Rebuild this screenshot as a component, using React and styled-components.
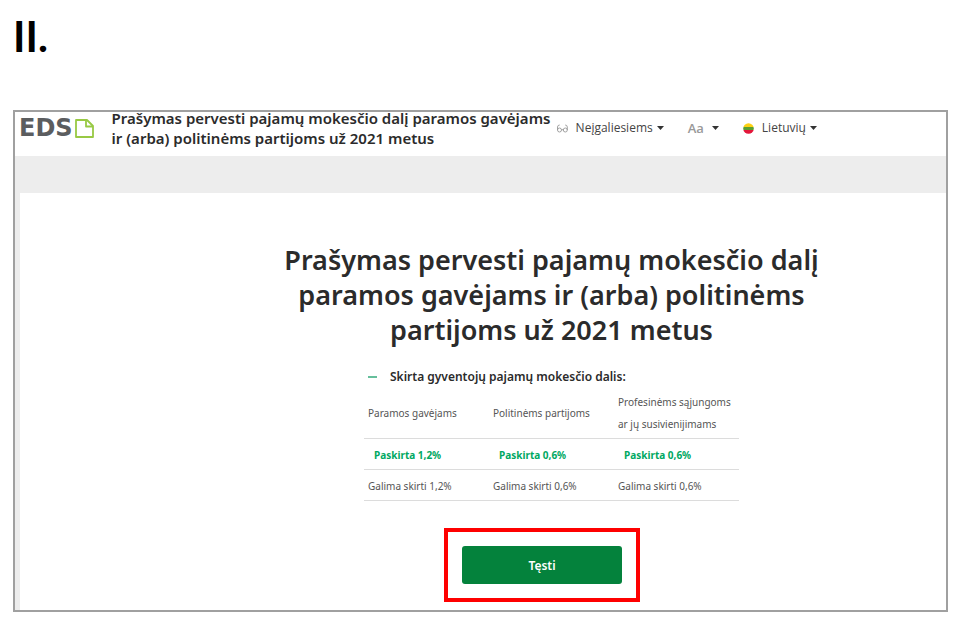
import React from "react";
import styled, { createGlobalStyle } from "styled-components";

const Global = createGlobalStyle`
  *, *::before, *::after { box-sizing: border-box; }
  body {
    margin: 0;
    background: #fff;
    color: #2b2b2b;
    font-family: "Noto Sans", "Open Sans", sans-serif;
  }
  h1, h2, h3, p { margin: 0; }
  button { font-family: inherit; cursor: pointer; }
`;

const Page = styled.div`
  padding: 12px 24px 20px 13px;
`;

const SectionNumber = styled.h1`
  margin-bottom: 50px;
  color: #000;
  font-family: "Lato", sans-serif;
  font-size: 42px;
  line-height: 48px;
  font-weight: 700;
`;

const Frame = styled.div`
  border: 2px solid #a0a0a0;
  background: #fff;
`;

const Header = styled.header`
  display: flex;
  align-items: center;
  height: 44px;
  padding: 0 4px 12px;
`;

const Logo = styled.a`
  display: flex;
  align-items: center;
  gap: 2px;
  color: #5b5d5f;
  font-family: "DejaVu Sans", sans-serif;
  font-size: 24px;
  line-height: 24px;
  font-weight: 700;
  text-decoration: none;
`;

const HeaderTitle = styled.p`
  flex: none;
  width: 445px;
  margin-left: 18px;
  font-size: 15px;
  line-height: 20px;
  font-weight: 600;
  white-space: nowrap;
`;

const Tools = styled.nav`
  display: flex;
  align-items: center;
  gap: 24px;
`;

const Tool = styled.button`
  display: flex;
  align-items: center;
  gap: 8px;
  padding: 0;
  border: 0;
  background: none;
  color: #444;
  font-family: "Open Sans", sans-serif;
  font-size: 12px;
  line-height: 16px;
  white-space: nowrap;
`;

const ToolLabel = styled.span`
  display: flex;
  align-items: center;
  gap: 4px;
`;

const TextSize = styled.span`
  color: #999;
  font-size: 13px;
  font-weight: 600;
`;

const Backdrop = styled.div`
  padding: 37px 0 0 5px;
  background: #ededed;
`;

const Panel = styled.main`
  display: flex;
  flex-direction: column;
  align-items: center;
  padding: 49px 0 8px 137px;
  background: #fff;
`;

const Title = styled.h2`
  font-size: 27px;
  line-height: 35px;
  font-weight: 600;
  text-align: center;
`;

const Share = styled.section`
  width: 375px;
  margin-top: 20px;
`;

const ShareToggle = styled.button`
  display: flex;
  align-items: center;
  gap: 13px;
  padding: 0 4px;
  border: 0;
  background: none;
  color: #2b2b2b;
  font-size: 12px;
  line-height: 20px;
  font-weight: 600;
  white-space: nowrap;
`;

const Dash = styled.span`
  width: 9px;
  height: 2px;
  background: #66bf9c;
`;

const ShareTable = styled.table`
  width: 100%;
  margin-top: 4px;
  border-collapse: collapse;
  table-layout: fixed;
  color: #555;
  font-size: 10px;
  line-height: 22px;
`;

const Cell = styled.td`
  padding: 5px ${(p) => (p.$assigned ? 10 : 4)}px 3px;
  border-bottom: 1px solid #dcdcdc;
  color: ${(p) => (p.$assigned ? "#00a862" : "inherit")};
  font-weight: ${(p) => (p.$assigned ? 700 : 400)};
  white-space: nowrap;
`;

const HeadCell = styled.th`
  padding: 0 4px 3px;
  border-bottom: 1px solid #dcdcdc;
  font-weight: 400;
  text-align: left;
  white-space: nowrap;
`;

const Highlight = styled.div`
  margin: 27px 19px 0 0;
  padding: 14px;
  border: 4px solid #fe0000;
`;

const Continue = styled.button`
  display: block;
  width: 160px;
  height: 38px;
  border: 0;
  border-radius: 3px;
  background: #04823c;
  color: #fff;
  font-size: 12px;
  font-weight: 600;
`;

const Caret = () => (
  <svg width="7" height="4" viewBox="0 0 7 4" aria-hidden="true">
    <path d="M0 0h7L3.500 4z" fill="#333" />
  </svg>
);

const DocumentIcon = () => (
  <svg width="19" height="19" viewBox="0 0 19 19" fill="none" stroke="#98c944" strokeWidth="1.800" strokeLinejoin="round" aria-hidden="true">
    <path d="M1 1h11l6 6v11H1z" />
    <path d="M11 1v6.500h7" />
  </svg>
);

const GlassesIcon = () => (
  <svg width="11" height="9" viewBox="0 0 11 9" fill="none" stroke="#999" strokeWidth="0.900" aria-hidden="true">
    <circle cx="2.500" cy="6" r="2" />
    <circle cx="8.300" cy="6" r="2" />
    <path d="M4.500 5.700h1.800M.5 6V3Q.6 1 2.700 1M10.300 6V3Q10.200 1 8.200 1" />
  </svg>
);

const FlagIcon = () => (
  <svg width="11" height="11" viewBox="0 0 11 11" aria-hidden="true">
    <clipPath id="flag-circle">
      <circle cx="5.500" cy="5.500" r="5.300" />
    </clipPath>
    <g clipPath="url(#flag-circle)">
      <path d="M0 0h11v4H0z" fill="#fdd113" />
      <path d="M0 4h11v3H0z" fill="#5a9f32" />
      <path d="M0 7h11v4H0z" fill="#e3173a" />
    </g>
  </svg>
);

const rows = [
  { assigned: true, cells: ["Paskirta 1,2%", "Paskirta 0,6%", "Paskirta 0,6%"] },
  { assigned: false, cells: ["Galima skirti 1,2%", "Galima skirti 0,6%", "Galima skirti 0,6%"] },
];

export default function App() {
  return (
    <>
      <Global />
      <Page>
        <SectionNumber>II.</SectionNumber>
        <Frame>
          <Header>
            <Logo href="#">
              EDS
              <DocumentIcon />
            </Logo>
            <HeaderTitle>
              Prašymas pervesti pajamų mokesčio dalį paramos gavėjams
              <br />
              ir (arba) politinėms partijoms už 2021 metus
            </HeaderTitle>
            <Tools>
              <Tool type="button">
                <GlassesIcon />
                <ToolLabel>
                  Neįgaliesiems
                  <Caret />
                </ToolLabel>
              </Tool>
              <Tool type="button">
                <TextSize>Aa</TextSize>
                <Caret />
              </Tool>
              <Tool type="button">
                <FlagIcon />
                <ToolLabel>
                  Lietuvių
                  <Caret />
                </ToolLabel>
              </Tool>
            </Tools>
          </Header>
          <Backdrop>
            <Panel>
              <Title>
                Prašymas pervesti pajamų mokesčio dalį
                <br />
                paramos gavėjams ir (arba) politinėms
                <br />
                partijoms už 2021 metus
              </Title>
              <Share>
                <ShareToggle type="button" aria-expanded="true">
                  <Dash />
                  Skirta gyventojų pajamų mokesčio dalis:
                </ShareToggle>
                <ShareTable>
                  <thead>
                    <tr>
                      <HeadCell scope="col">Paramos gavėjams</HeadCell>
                      <HeadCell scope="col">Politinėms partijoms</HeadCell>
                      <HeadCell scope="col">
                        Profesinėms sąjungoms
                        <br />
                        ar jų susivienijimams
                      </HeadCell>
                    </tr>
                  </thead>
                  <tbody>
                    {rows.map((row, i) => (
                      <tr key={i}>
                        {row.cells.map((text, j) => (
                          <Cell key={j} $assigned={row.assigned}>
                            {text}
                          </Cell>
                        ))}
                      </tr>
                    ))}
                  </tbody>
                </ShareTable>
              </Share>
              <Highlight>
                <Continue type="button">Tęsti</Continue>
              </Highlight>
            </Panel>
          </Backdrop>
        </Frame>
      </Page>
    </>
  );
}
